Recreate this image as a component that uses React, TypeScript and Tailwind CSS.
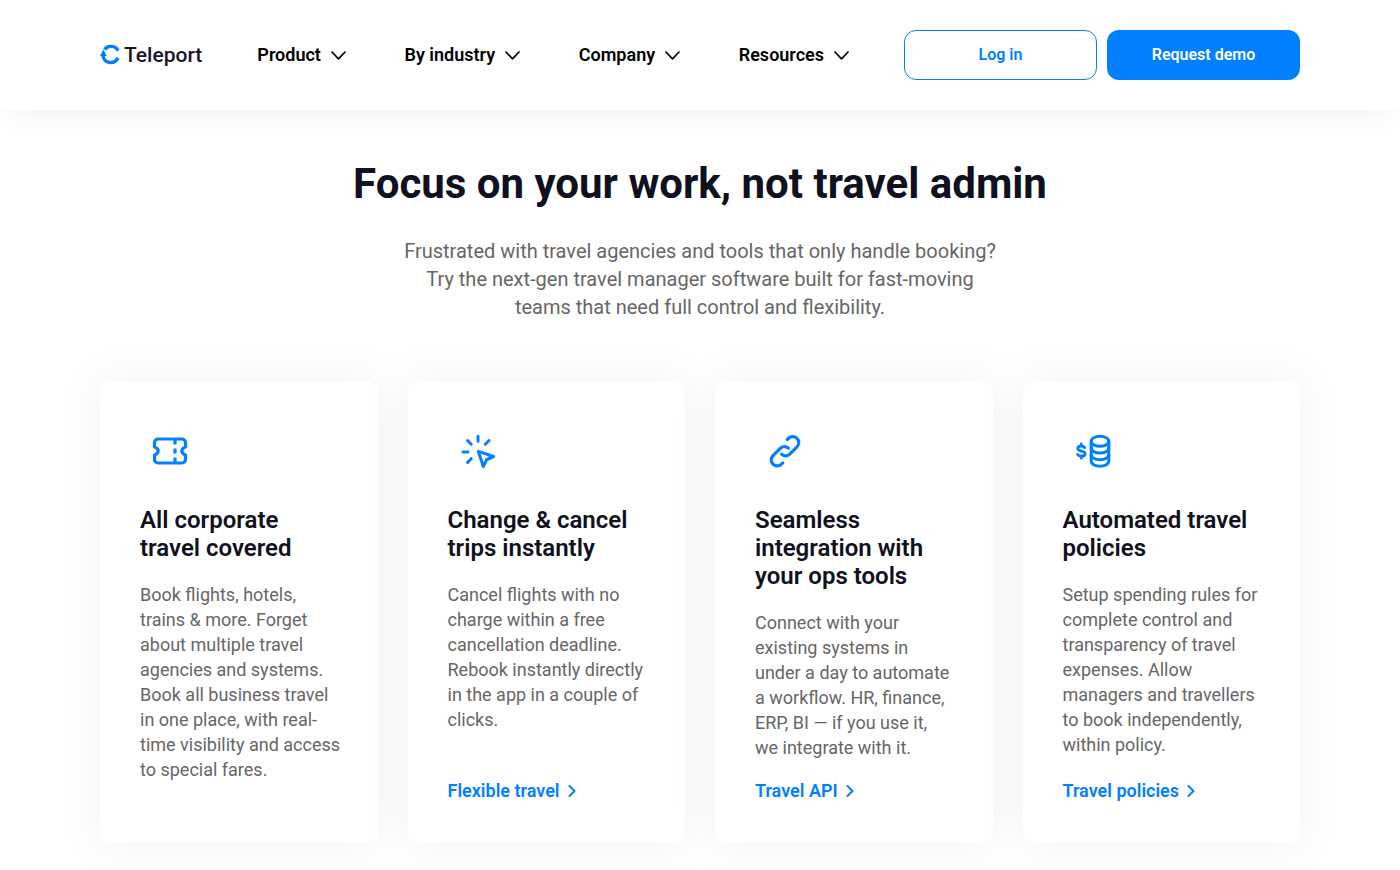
import type { ReactNode } from 'react'

type Feature = {
  title: string
  text: string
  icon: ReactNode
  link?: string
}

const navItems = ['Product', 'By industry', 'Company', 'Resources']

const TicketIcon = () => (
  <svg width="60" height="60" viewBox="0 0 60 60" fill="none" stroke="#0080ff" strokeWidth="3.2" strokeLinejoin="round" aria-hidden="true">
    <path d="M18 18h24a3.5 3.5 0 0 1 3.5 3.5V26c-2.5.9-3.7 2.300-3.700 4s1.200 3.100 3.700 4v4.500a3.500 3.500 0 0 1-3.500 3.500H18a3.500 3.500 0 0 1-3.500-3.500V34c2.500-.9 3.700-2.300 3.700-4s-1.200-3.100-3.700-4v-4.500A3.500 3.500 0 0 1 18 18z" />
    <path d="M35 18v5.500M35 27.500v5M35 36.500V42" />
  </svg>
)

const ClickIcon = () => (
  <svg width="60" height="60" viewBox="0 0 60 60" fill="none" stroke="#0080ff" strokeWidth="3" strokeLinecap="round" strokeLinejoin="round" aria-hidden="true">
    <path d="M38 15.800v4.900M27.500 20l3.700 3.800M49 20l-3.700 3.800M23 31.500h5M27.500 42l3.700-3.800" transform="translate(-8 -.5)" />
    <path d="M30.300 30.300l15.400 5.200-6.900 3-3.500 7z" />
  </svg>
)

const LinkIcon = () => (
  <svg width="60" height="60" viewBox="0 0 60 60" fill="none" stroke="#0080ff" strokeWidth="3.2" strokeLinecap="round" aria-hidden="true">
    <path d="M33.400 27.200a5.700 5.700 0 0 0-8.200.2l-7.200 7.200a6 6 0 0 0 8.500 8.500l1.300-1.200" />
    <path d="M26.600 33.200a5.700 5.700 0 0 0 8.200-.2l7.200-7.200a6 6 0 0 0-8.500-8.500l-1.300 1.200" />
  </svg>
)

const CoinsIcon = () => (
  <svg width="60" height="60" viewBox="0 0 60 60" fill="none" stroke="#0080ff" strokeWidth="3" strokeLinecap="round" aria-hidden="true">
    <ellipse cx="37" cy="20.300" rx="8.800" ry="5" />
    <path d="M28.200 20.300v19.700c0 3 3.900 5.300 8.800 5.300s8.800-2.300 8.800-5.300V20.300" />
    <path d="M28.200 27c0 2.900 3.900 5 8.800 5s8.800-2.100 8.800-5M28.200 33.700c0 2.900 3.900 5 8.800 5s8.800-2.100 8.800-5" />
    <path d="M21.700 26.600c-.8-1.200-2-1.600-3.400-1.600-2 0-3.500.9-3.500 2.500 0 3.500 7.300 1.600 7.300 5.200 0 1.600-1.600 2.500-3.800 2.500-1.700 0-3-.5-3.800-1.700M18.300 23v2M18.300 35.200v2" strokeWidth="2.800" />
  </svg>
)

const features: Feature[] = [
  {
    title: 'All corporate\ntravel covered',
    text: 'Book flights, hotels,\ntrains & more. Forget\nabout multiple travel\nagencies and systems.\nBook all business travel\nin one place, with real-\ntime visibility and access\nto special fares.',
    icon: <TicketIcon />,
  },
  {
    title: 'Change & cancel\ntrips instantly',
    text: 'Cancel flights with no\ncharge within a free\ncancellation deadline.\nRebook instantly directly\nin the app in a couple of\nclicks.',
    icon: <ClickIcon />,
    link: 'Flexible travel',
  },
  {
    title: 'Seamless\nintegration with\nyour ops tools',
    text: 'Connect with your\nexisting systems in\nunder a day to automate\na workflow. HR, finance,\nERP, BI — if you use it,\nwe integrate with it.',
    icon: <LinkIcon />,
    link: 'Travel API',
  },
  {
    title: 'Automated travel\npolicies',
    text: 'Setup spending rules for\ncomplete control and\ntransparency of travel\nexpenses. Allow\nmanagers and travellers\nto book independently,\nwithin policy.',
    icon: <CoinsIcon />,
    link: 'Travel policies',
  },
]

function Logo() {
  return (
    <a href="#" className="flex items-center gap-1 text-[21px] leading-6 font-medium text-[#15152b]">
      <svg width="20" height="20" viewBox="0 0 20 20" fill="none" aria-hidden="true">
        <path d="M4.500 4.500A7.900 7.900 0 0 1 18 5.800" stroke="#0080ff" strokeWidth="3.400" />
        <path d="M18 12.800A7.900 7.900 0 0 1 3 11" stroke="#0080ff" strokeWidth="3.400" />
        <path d="M3.400 4.500L0 11h6.800z" fill="#0080ff" />
      </svg>
      Teleport
    </a>
  )
}

function FeatureCard({ title, text, icon, link }: Feature) {
  return (
    <article className="flex flex-col rounded-[10px] bg-white py-10 pr-7 pl-10 shadow-[0_0_50px_rgba(0,0,0,0.06)]">
      {icon}
      <h2 className="mt-[25px] text-[24px] leading-7 font-semibold whitespace-pre-line text-[#0f1020]">{title}</h2>
      <p className="mt-5 text-[18px] leading-[25px] whitespace-pre-line text-[#666]">{text}</p>
      {link && (
        <a href="#" className="mt-auto flex items-center gap-2 pt-[19px] text-[18px] leading-6 font-semibold text-[#0080ff]">
          {link}
          <svg width="8" height="12" viewBox="0 0 8 12" fill="none" stroke="currentColor" strokeWidth="2" strokeLinecap="round" strokeLinejoin="round" aria-hidden="true">
            <path d="M1.500 1l5 5-5 5" />
          </svg>
        </a>
      )}
    </article>
  )
}

export default function App() {
  return (
    <div className="min-h-screen bg-white font-['Roboto','Liberation_Sans',sans-serif]">
      <header className="bg-white shadow-[0_10px_30px_-10px_rgba(0,0,0,0.08)]">
        <div className="mx-auto flex h-[110px] max-w-[1200px] items-center">
          <Logo />
          <nav className="mx-[55px] flex flex-1 justify-between">
            {navItems.map((item) => (
              <button key={item} className="flex items-center gap-2.5 text-[18px] leading-6 font-semibold text-black">
                {item}
                <svg width="15" height="9" viewBox="0 0 15 9" fill="none" stroke="currentColor" strokeWidth="1.700" strokeLinecap="round" strokeLinejoin="round" aria-hidden="true">
                  <path d="M1 1l6.500 6.800L14 1" />
                </svg>
              </button>
            ))}
          </nav>
          <div className="flex gap-2.5">
            <button className="h-[50px] w-[193px] rounded-xl border border-[#0080ff] text-[16px] font-semibold text-[#0080ff]">
              Log in
            </button>
            <button className="h-[50px] w-[193px] rounded-xl bg-[#0080ff] text-[16px] font-semibold text-white">
              Request demo
            </button>
          </div>
        </div>
      </header>

      <main className="mx-auto max-w-[1200px] pt-12 pb-7">
        <h1 className="text-center text-[42px] leading-[52px] font-bold text-[#0f1020]">
          Focus on your work, not travel admin
        </h1>
        <p className="mt-[27px] text-center text-[20px] leading-7 whitespace-pre-line text-[#666]">
          {'Frustrated with travel agencies and tools that only handle booking?\nTry the next-gen travel manager software built for fast-moving\nteams that need full control and flexibility.'}
        </p>
        <div className="mt-[60px] grid grid-cols-4 gap-[30px]">
          {features.map((feature) => (
            <FeatureCard key={feature.title} {...feature} />
          ))}
        </div>
      </main>
    </div>
  )
}
